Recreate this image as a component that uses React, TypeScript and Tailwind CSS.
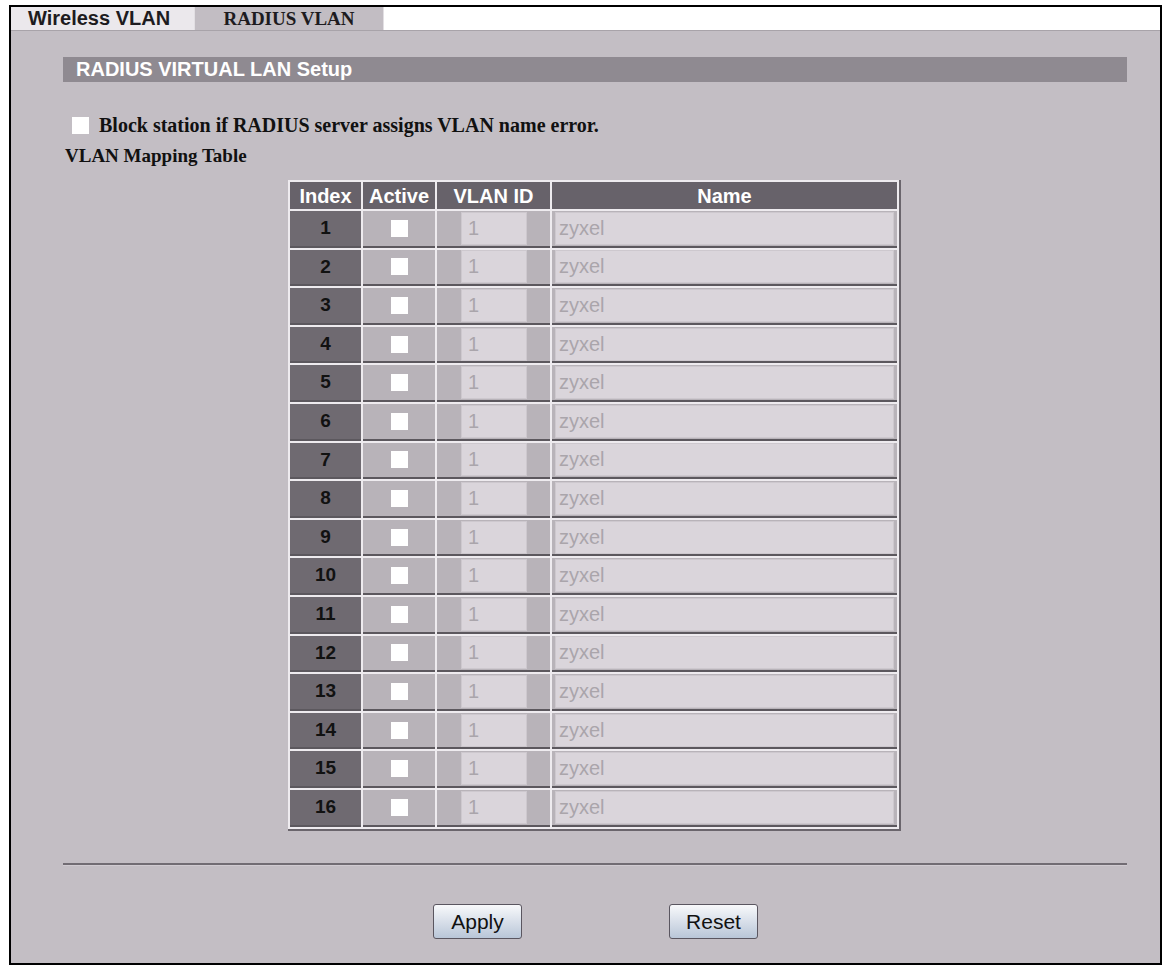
const rows = Array.from({ length: 16 }, (_, i) => i + 1);

function Box({ className = "" }: { className?: string }) {
  return <span className={"block w-[17px] h-[17px] bg-white " + className} />;
}

export default function App() {
  return (
    <div className="w-[1165px] h-[967px] bg-white relative overflow-hidden font-['Liberation_Sans',Arial,sans-serif]">
      <div className="ml-[9px] mt-[5px] w-[1153px] h-[960px] border-2 border-black flex flex-col">
        {/* tabs */}
        <div className="flex h-[24px] bg-white border-b border-[#a8a3a9]">
          <div className="w-[183px] bg-[#ebe8ec] pl-[17px] text-[20px] leading-[22px] font-bold text-[#1d1b20]">
            Wireless VLAN
          </div>
          <div className="w-[190px] bg-[#c2bdc3] border-x border-[#e2dfe3] text-center font-['Liberation_Serif',serif] text-[19px] leading-[23px] font-bold text-[#1d1b20]">
            RADIUS VLAN
          </div>
        </div>

        {/* panel */}
        <div className="flex-1 bg-[#c3bec4] flex flex-col">
          <div className="ml-[52px] mr-[33px] mt-[26px] h-[25px] bg-[#8f8a91] pl-[13px] text-white font-bold text-[20px] leading-[25px]">
            RADIUS VIRTUAL LAN Setup
          </div>

          <div className="ml-[61px] mt-[32px] h-[22px] flex items-center gap-[10px] font-['Liberation_Serif',serif] font-bold text-[20px] leading-[22px] text-[#111]">
            <Box />
            <span>Block station if RADIUS server assigns VLAN name error.</span>
          </div>

          <div className="ml-[54px] mt-[9px] h-[22px] font-['Liberation_Serif',serif] font-bold text-[19px] leading-[22px] text-[#111]">
            VLAN Mapping Table
          </div>

          <table className="ml-[277px] mt-[13px] w-[613px] table-fixed border-separate border-spacing-[2px] bg-[#eeebef] border-r-2 border-b-2 border-[#6a656c]">
            <thead>
              <tr className="h-[27px] text-white text-[20px] leading-[22px]">
                <th className="w-[71px] bg-[#67626a] font-bold">Index</th>
                <th className="w-[72px] bg-[#67626a] font-bold">Active</th>
                <th className="w-[113px] bg-[#67626a] font-bold">VLAN ID</th>
                <th className="bg-[#67626a] font-bold">Name</th>
              </tr>
            </thead>
            <tbody>
              {rows.map((n) => (
                <tr key={n} className="h-[36.6px]">
                  <td className="bg-[#6f6a71] text-center font-bold text-[19px] text-[#111] border-b-2 border-[#5c585e]">{n}</td>
                  <td className="bg-[#b8b3b9] border-b-2 border-[#5c585e]">
                    <Box className="mx-auto" />
                  </td>
                  <td className="bg-[#b8b3b9] border-b-2 border-[#5c585e] pl-[24px] pr-[23px]">
                    <div className="h-[33px] bg-[#dad5db] border border-[#cdc8ce] pl-[6px] text-[20px] leading-[31px] text-[#aaa5ab]">1</div>
                  </td>
                  <td className="bg-[#b8b3b9] border-b-2 border-[#5c585e] px-[3px]">
                    <div className="h-[33px] bg-[#dad5db] border border-[#cdc8ce] pl-[3px] text-[20px] leading-[31px] text-[#aaa5ab]">zyxel</div>
                  </td>
                </tr>
              ))}
            </tbody>
          </table>

          <div className="ml-[52px] mr-[33px] mt-[32px] h-[3px] bg-[#716c73] border-b border-[#d0cbd1]" />

          <div className="mt-[38px] flex">
            <button className="ml-[422px] w-[89px] h-[35px] rounded-[3px] border border-[#5a5660] bg-gradient-to-b from-[#f8f9fb] to-[#b9c6d8] text-[21px] leading-[33px] text-[#111]">
              Apply
            </button>
            <button className="ml-[147px] w-[89px] h-[35px] rounded-[3px] border border-[#5a5660] bg-gradient-to-b from-[#f8f9fb] to-[#b9c6d8] text-[21px] leading-[33px] text-[#111]">
              Reset
            </button>
          </div>
        </div>
      </div>
    </div>
  );
}
